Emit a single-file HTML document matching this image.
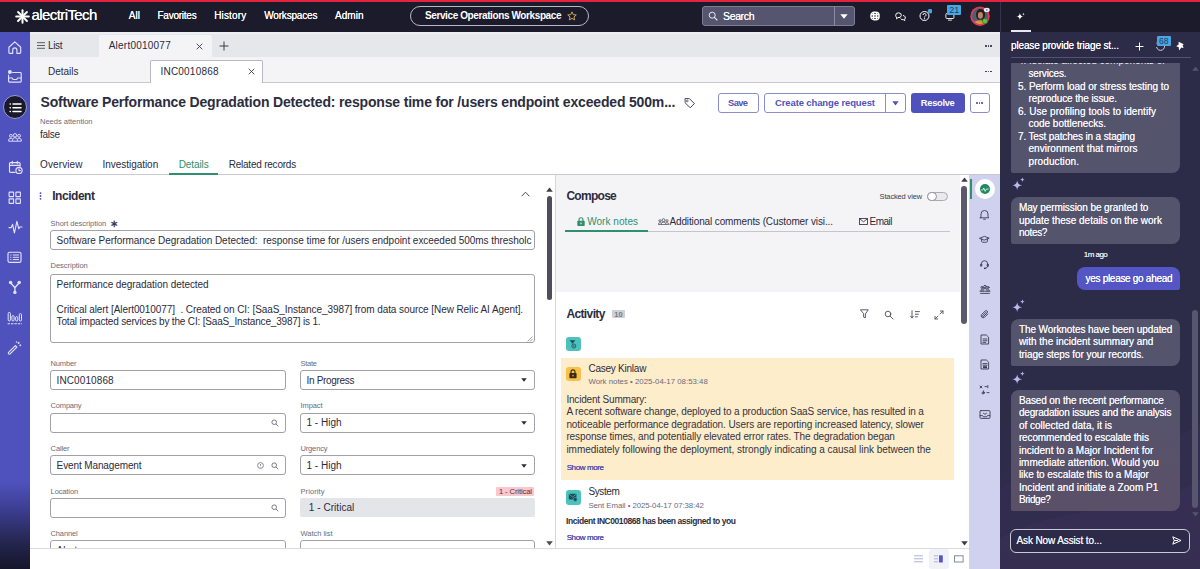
<!DOCTYPE html>
<html lang="en"><head><meta charset="utf-8"><title>Service Operations Workspace</title>
<style>
html,body{margin:0;padding:0;}
body{width:1200px;height:569px;overflow:hidden;position:relative;background:#fff;
font-family:"Liberation Sans",sans-serif;}
.b{position:absolute;box-sizing:border-box;display:block;}
.t{position:absolute;white-space:pre;display:block;}
</style></head><body>
<div class="b" style="left:0px;top:0px;width:1200px;height:32px;background:#1b1b2c;"></div>
<div class="b" style="left:0px;top:0px;width:1200px;height:2px;background:#e4243f;"></div>
<div class="b" style="left:0px;top:32px;width:30px;height:537px;background:linear-gradient(180deg,#4f52bd 0px,#4f52bd 450px,#3a3c8c 480px,#25264f 510px,#15152a 537px);"></div>
<div class="b" style="left:30px;top:32px;width:970px;height:25.5px;background:#e6e7eb;"></div>
<div class="b" style="left:30px;top:31.6px;width:970px;height:2.6px;background:#eeeff2;"></div>
<div class="b" style="left:30px;top:57.3px;width:970px;height:25.7px;background:#f4f4f7;"></div>
<div class="b" style="left:30px;top:82px;width:970px;height:1px;background:#c9cad1;"></div>
<div class="b" style="left:30px;top:83px;width:970px;height:92px;background:#ffffff;"></div>
<div class="b" style="left:30px;top:174px;width:970px;height:1px;background:#c9cad1;"></div>
<svg class="b" style="left:14.6px;top:8.9px;" width="15" height="15" viewBox="0 0 15 15"><g stroke="#fff" stroke-width="2" stroke-linecap="round"><line x1="8.70" y1="7.50" x2="13.80" y2="7.50"/><line x1="8.35" y1="8.35" x2="11.95" y2="11.95"/><line x1="7.50" y1="8.70" x2="7.50" y2="13.80"/><line x1="6.65" y1="8.35" x2="3.05" y2="11.95"/><line x1="6.30" y1="7.50" x2="1.20" y2="7.50"/><line x1="6.65" y1="6.65" x2="3.05" y2="3.05"/><line x1="7.50" y1="6.30" x2="7.50" y2="1.20"/><line x1="8.35" y1="6.65" x2="11.95" y2="3.05"/></g><circle cx="7.5" cy="7.5" r="1.6" fill="#fff"/></svg>
<span class="t" style="left:31.50px;top:5px;font-size:15px;line-height:20px;color:#fff;letter-spacing:-0.590px;text-shadow:0 0 0.5px #fff;">alectriTech</span>
<span class="t" style="left:128.70px;top:9px;font-size:10px;line-height:13px;color:#fff;letter-spacing:0.093px;text-shadow:0 0 0.4px #fff;">All</span>
<span class="t" style="left:157.50px;top:9px;font-size:10px;line-height:13px;color:#fff;letter-spacing:-0.241px;text-shadow:0 0 0.4px #fff;">Favorites</span>
<span class="t" style="left:214.20px;top:9px;font-size:10px;line-height:13px;color:#fff;letter-spacing:0.148px;text-shadow:0 0 0.4px #fff;">History</span>
<span class="t" style="left:264.20px;top:9px;font-size:10px;line-height:13px;color:#fff;letter-spacing:-0.171px;text-shadow:0 0 0.4px #fff;">Workspaces</span>
<span class="t" style="left:335.00px;top:9px;font-size:10px;line-height:13px;color:#fff;letter-spacing:0.038px;text-shadow:0 0 0.4px #fff;">Admin</span>
<div class="b" style="left:410px;top:6px;width:179px;height:20px;border:1px solid #b9b9c6;border-radius:10px;"></div>
<span class="t" style="left:425.00px;top:9px;font-size:10px;line-height:13px;color:#fff;font-weight:700;letter-spacing:-0.393px;">Service Operations Workspace</span>
<svg class="b" style="left:567px;top:11px;" width="10" height="10" viewBox="0 0 10 10"><path d="M5 0.9l1.25 2.75 3 .3-2.25 2 .65 2.95L5 7.4 2.35 8.9 3 5.95.75 3.95l3-.3z" fill="none" stroke="#d9b45a" stroke-width="0.9" stroke-linejoin="round"/></svg>
<div class="b" style="left:702px;top:6px;width:152.5px;height:20px;background:#55556f;border:1px solid #7d7d95;border-radius:3px;"></div>
<div class="b" style="left:834px;top:7px;width:1px;height:18px;background:#8a8aa0;"></div>
<svg class="b" style="left:708px;top:11px;" width="10" height="10" viewBox="0 0 10 10"><circle cx="4.2" cy="4.2" r="3" fill="none" stroke="#e8e8f0" stroke-width="1"/><line x1="6.4" y1="6.4" x2="9" y2="9" stroke="#e8e8f0" stroke-width="1.1" stroke-linecap="round"/></svg>
<span class="t" style="left:723.00px;top:9px;font-size:10.5px;line-height:14px;color:#fff;letter-spacing:-0.354px;text-shadow:0 0 0.4px #fff;">Search</span>
<svg class="b" style="left:840px;top:14px;" width="8" height="5" viewBox="0 0 8 5"><path d="M0.3 0.3h7.4L4 4.7z" fill="#fff"/></svg>
<svg class="b" style="left:870px;top:11px;" width="10" height="10" viewBox="0 0 10 10"><g fill="none" stroke="#fff" stroke-width="1.400"><rect x="0.900" y="1.200" width="8.200" height="7.600" rx="3.200"/><line x1="0.900" y1="3.700" x2="9.100" y2="3.700"/><line x1="0.900" y1="6.300" x2="9.100" y2="6.300"/><line x1="3.600" y1="1.200" x2="3.600" y2="8.800"/><line x1="6.400" y1="1.200" x2="6.400" y2="8.800"/></g></svg>
<svg class="b" style="left:894.5px;top:11.5px;" width="11" height="9" viewBox="0 0 11 9"><g fill="none" stroke="#fff" stroke-width="1" stroke-linejoin="round"><path d="M0.700 3.300a2.800 2.400 0 1 1 2.300 2.300L1.500 6.800V5.200A2.400 2.400 0 0 1 .7 3.300z"/><path d="M5.600 6.600a2.700 2.200 0 0 0 2.800 1.100l1.300 1V7.200a2.200 2.200 0 0 0-1.700-3.700"/></g></svg>
<svg class="b" style="left:918px;top:9px;" width="14" height="14" viewBox="0 0 14 14"><circle cx="6.500" cy="7" r="4.500" fill="none" stroke="#fff" stroke-width="1"/><path d="M5 6a1.500 1.500 0 1 1 2.200 1.300c-.5.300-.7.600-.7 1.100" fill="none" stroke="#fff" stroke-width="1"/><circle cx="6.500" cy="9.700" r=".6" fill="#fff"/><circle cx="12" cy="2.200" r="2.300" fill="#4ea2e0"/></svg>
<svg class="b" style="left:945px;top:12.5px;" width="10" height="8" viewBox="0 0 10 8"><rect x="0.900" y="0.500" width="8" height="5" rx=".8" fill="none" stroke="#fff" stroke-width=".9"/><line x1="3" y1="7.100" x2="6.800" y2="7.100" stroke="#fff" stroke-width=".9"/></svg>
<div class="b" style="left:947px;top:5px;width:14px;height:10px;background:#4aa5e3;border-radius:1px;"></div>
<span class="t" style="left:949.29px;top:4px;font-size:9px;line-height:12px;color:#1d3c66;">21</span>
<svg class="b" style="left:970px;top:6px;" width="20" height="20" viewBox="0 0 20 20"><defs><clipPath id="avc"><circle cx="10" cy="10.200" r="8"/></clipPath></defs><circle cx="10" cy="10.200" r="9.700" fill="#e8384f"/><g clip-path="url(#avc)"><rect x="0" y="0" width="20" height="20" fill="#4f5f78"/><ellipse cx="10.600" cy="8.600" rx="4.600" ry="5.800" fill="#2a1d1e"/><ellipse cx="10.400" cy="9.400" rx="2.500" ry="3.300" fill="#b98468"/><path d="M2 20c.5-4.500 4-5.600 8-5.600s6.500 1.400 8 5.600z" fill="#e8923a"/><path d="M8.600 13.800h3.400l-1.700 2.400z" fill="#b98468"/></g><circle cx="15" cy="15" r="2.600" fill="#62c046" stroke="#2f7a2c" stroke-width=".7"/><ellipse cx="16.800" cy="3.900" rx="2.900" ry="2.100" fill="#f4f0f4"/><circle cx="16.800" cy="3.900" r=".9" fill="#b06a7a"/></svg>
<svg class="b" style="left:7px;top:39.5px;" width="16" height="15" viewBox="0 0 16 15"><path fill="none" stroke="#e2e2fa" stroke-width="1.15" stroke-linecap="round" stroke-linejoin="round" d="M1.900 7.200L7.800 1.900l5.900 5.300V12.400a.9.900 0 0 1-.9.900h-2.900V9.900a2.100 2.100 0 0 0-4.200 0v3.400H2.800a.9.900 0 0 1-.9-.9z"/></svg>
<svg class="b" style="left:7px;top:69px;" width="16" height="15" viewBox="0 0 16 15"><path fill="none" stroke="#e2e2fa" stroke-width="1.15" stroke-linecap="round" stroke-linejoin="round" d="M5.600 3.500h7.700a.9.900 0 0 1 .9.900v7.800a.9.900 0 0 1-.9.900H2.500a.9.900 0 0 1-.9-.9V6"/><path fill="none" stroke="#e2e2fa" stroke-width="1.15" stroke-linecap="round" stroke-linejoin="round" d="M1.600 9h3.600l.9 1.500h3.600L10.600 9h3.600"/><circle cx="2.900" cy="3" r="2" fill="#e2e2fa"/></svg>
<div class="b" style="left:2.8px;top:95px;width:24.2px;height:24.2px;background:#191929;border-radius:50%;border:1px solid #9a9cdc;"></div>
<svg class="b" style="left:8.5px;top:101.5px;" width="14" height="12" viewBox="0 0 14 12"><g stroke="#fff" stroke-width="1.500" stroke-linecap="round"><line x1="4" y1="2" x2="12" y2="2"/><line x1="4" y1="5.700" x2="12" y2="5.700"/><line x1="4" y1="9.400" x2="12" y2="9.400"/><line x1="1.100" y1="2" x2="1.300" y2="2"/><line x1="1.100" y1="5.700" x2="1.300" y2="5.700"/><line x1="1.100" y1="9.400" x2="1.300" y2="9.400"/></g></svg>
<svg class="b" style="left:8px;top:133px;" width="14" height="9" viewBox="0 0 14 9"><g fill="none" stroke="#e2e2fa" stroke-width=".95"><circle cx="7" cy="2.300" r="1.700"/><circle cx="2.900" cy="2.800" r="1.400"/><circle cx="11.100" cy="2.800" r="1.400"/><path d="M4.600 8.200V6.800a2.400 2.100 0 0 1 4.800 0v1.400z"/><path d="M0.700 8.200V7a2.100 1.800 0 0 1 3.600-1.200M13.300 8.200V7a2.100 1.800 0 0 0-3.600-1.200M0.700 8.200h3.900M9.400 8.200h3.900"/></g></svg>
<svg class="b" style="left:7.5px;top:160px;" width="16" height="15" viewBox="0 0 16 15"><path fill="none" stroke="#e2e2fa" stroke-width="1.15" stroke-linecap="round" stroke-linejoin="round" d="M7 12.400H2.500A1 1 0 0 1 1.500 11.400V3.600a1 1 0 0 1 1-1h8.600a1 1 0 0 1 1 1v2.600M1.500 5.400h10.600M4.300 1.200v2.400M9.300 1.200v2.400"/><circle fill="none" stroke="#e2e2fa" stroke-width="1.15" stroke-linecap="round" stroke-linejoin="round" cx="11" cy="10.400" r="3.100"/><path fill="none" stroke="#e2e2fa" stroke-width="1.15" stroke-linecap="round" stroke-linejoin="round" d="M11 8.800v1.800h1.400"/></svg>
<svg class="b" style="left:8.2px;top:190.7px;" width="14" height="14" viewBox="0 0 14 14"><g fill="none" stroke="#e2e2fa" stroke-width="1.100"><rect x="1.100" y="1.100" width="4.500" height="4.500" rx=".4"/><rect x="7.900" y="1.100" width="4.500" height="4.500" rx=".4"/><rect x="1.100" y="7.900" width="4.500" height="4.500" rx=".4"/><rect x="7.900" y="7.900" width="4.500" height="4.500" rx=".4"/></g></svg>
<svg class="b" style="left:7.5px;top:220px;" width="15" height="14" viewBox="0 0 15 14"><path fill="none" stroke="#e2e2fa" stroke-width="1.15" stroke-linecap="round" stroke-linejoin="round" d="M1 7.600h2.200L4.600 4.400 6.400 13 8.900 1.400l1.900 7.400 1-1.800H14"/></svg>
<svg class="b" style="left:7.4px;top:251px;" width="15" height="13" viewBox="0 0 15 13"><rect fill="none" stroke="#e2e2fa" stroke-width="1.15" stroke-linecap="round" stroke-linejoin="round" x="1" y="1.200" width="13" height="10.200" rx="1.600"/><g stroke="#e2e2fa" stroke-width="1" stroke-linecap="round"><line x1="6.200" y1="4" x2="11.600" y2="4"/><line x1="6.200" y1="6.300" x2="11.600" y2="6.300"/><line x1="6.200" y1="8.600" x2="11.600" y2="8.600"/><line x1="3.600" y1="4" x2="4" y2="4"/><line x1="3.600" y1="6.300" x2="4" y2="6.300"/><line x1="3.600" y1="8.600" x2="4" y2="8.600"/></g></svg>
<svg class="b" style="left:8px;top:279.5px;" width="14" height="15" viewBox="0 0 14 15"><g fill="none" stroke="#e2e2fa" stroke-width="1.400" stroke-linecap="round"><path d="M2.600 2.800L6.900 7.600 11.200 2.800M6.900 7.600V12"/></g><circle cx="2.600" cy="2.500" r="1.700" fill="#e2e2fa"/><circle cx="11.200" cy="2.500" r="1.700" fill="#e2e2fa"/><circle cx="6.900" cy="12.400" r="1.700" fill="#e2e2fa"/></svg>
<svg class="b" style="left:6.8px;top:310.5px;" width="16" height="15" viewBox="0 0 16 15"><g fill="none" stroke="#e2e2fa" stroke-width="1"><rect x="1.200" y="1.400" width="2.200" height="8.600" rx="1.100"/><rect x="4.900" y="4.600" width="2.200" height="5.400" rx="1.100"/><rect x="8.600" y="5.600" width="2.200" height="4.400" rx="1.100"/><rect x="12.300" y="2.600" width="2.200" height="7.400" rx="1.100"/></g><line x1="0.600" y1="12.800" x2="15" y2="12.800" stroke="#e2e2fa" stroke-width="1.100" stroke-dasharray="2.400 1"/></svg>
<svg class="b" style="left:7.4px;top:340px;" width="15" height="15" viewBox="0 0 15 15"><path fill="none" stroke="#e2e2fa" stroke-width="1.15" stroke-linecap="round" stroke-linejoin="round" d="M1.600 12.400L8.400 5.600l1.500 1.500-6.800 6.800a1.060 1.060 0 0 1-1.500-1.500z"/><g stroke="#e2e2fa" stroke-width=".9" stroke-linecap="round"><path d="M11.600 2.200v1.400M10.900 2.900h1.400M13.300 4.800v1M12.800 5.300h1M9.400 1.600v.8"/></g></svg>
<svg class="b" style="left:36.5px;top:41.5px;" width="8" height="7" viewBox="0 0 8 7"><g stroke="#4a4a5a" stroke-width=".9"><line x1="0" y1="0.700" x2="8" y2="0.700"/><line x1="0" y1="3.500" x2="8" y2="3.500"/><line x1="0" y1="6.300" x2="8" y2="6.300"/></g></svg>
<span class="t" style="left:48.00px;top:39px;font-size:10px;line-height:13px;color:#2b2b3b;letter-spacing:-0.354px;">List</span>
<div class="b" style="left:98.6px;top:34.5px;width:113.4px;height:23.5px;background:#f4f4f7;border-radius:2px 2px 0 0;"></div>
<span class="t" style="left:108.70px;top:39px;font-size:10px;line-height:13px;color:#2b2b3b;letter-spacing:0.228px;">Alert0010077</span>
<svg class="b" style="left:196px;top:43px;" width="7" height="7" viewBox="0 0 7 7"><path d="M0.700 0.700l5.600 5.600M6.300 0.700L0.700 6.300" stroke="#3b3b4b" stroke-width=".9"/></svg>
<svg class="b" style="left:219px;top:41px;" width="10" height="10" viewBox="0 0 10 10"><path d="M5 0.500v9M0.500 5h9" stroke="#3b3b4b" stroke-width="1"/></svg>
<div class="b" style="left:985.2px;top:45.2px;width:1.6px;height:1.6px;background:#2b2b3b;border-radius:50%;"></div>
<div class="b" style="left:985.2px;top:70.5px;width:1.6px;height:1.6px;background:#2b2b3b;border-radius:50%;"></div>
<div class="b" style="left:987.8000000000001px;top:45.2px;width:1.6px;height:1.6px;background:#2b2b3b;border-radius:50%;"></div>
<div class="b" style="left:987.8000000000001px;top:70.5px;width:1.6px;height:1.6px;background:#2b2b3b;border-radius:50%;"></div>
<div class="b" style="left:990.4000000000001px;top:45.2px;width:1.6px;height:1.6px;background:#2b2b3b;border-radius:50%;"></div>
<div class="b" style="left:990.4000000000001px;top:70.5px;width:1.6px;height:1.6px;background:#2b2b3b;border-radius:50%;"></div>
<span class="t" style="left:48.00px;top:65px;font-size:10px;line-height:13px;color:#2b2b3b;letter-spacing:-0.011px;">Details</span>
<div class="b" style="left:150px;top:60.3px;width:113px;height:22.7px;background:#ffffff;border:1px solid #b9bac3;border-bottom:none;border-radius:2px 2px 0 0;"></div>
<span class="t" style="left:160.50px;top:65px;font-size:10px;line-height:13px;color:#2b2b3b;letter-spacing:0.205px;">INC0010868</span>
<svg class="b" style="left:247.5px;top:68px;" width="7" height="7" viewBox="0 0 7 7"><path d="M0.700 0.700l5.600 5.600M6.300 0.700L0.700 6.300" stroke="#3b3b4b" stroke-width=".9"/></svg>
<span class="t" style="left:40.50px;top:93px;font-size:14px;line-height:18px;color:#2c2d3d;font-weight:700;letter-spacing:-0.168px;">Software Performance Degradation Detected: response time for /users endpoint exceeded 500m...</span>
<svg class="b" style="left:683px;top:96px;" width="13" height="13" viewBox="0 0 13 13"><path d="M2 2.600h4.400l5 5-4.200 4.200-5-5z" fill="none" stroke="#4a4a5a" stroke-width="1" stroke-linejoin="round"/><circle cx="4.300" cy="4.900" r=".9" fill="none" stroke="#4a4a5a" stroke-width=".8"/></svg>
<span class="t" style="left:40.00px;top:117px;font-size:7.5px;line-height:10px;color:#6a6b7c;letter-spacing:-0.003px;">Needs attention</span>
<span class="t" style="left:40.00px;top:128px;font-size:10px;line-height:13px;color:#2b2b3b;letter-spacing:-0.281px;">false</span>
<span class="t" style="left:40.00px;top:158px;font-size:10px;line-height:13px;color:#2b2b3b;letter-spacing:0.118px;">Overview</span>
<span class="t" style="left:102.50px;top:158px;font-size:10px;line-height:13px;color:#2b2b3b;letter-spacing:-0.037px;">Investigation</span>
<span class="t" style="left:178.70px;top:158px;font-size:10px;line-height:13px;color:#2f8f6e;letter-spacing:-0.095px;">Details</span>
<span class="t" style="left:228.70px;top:158px;font-size:10px;line-height:13px;color:#2b2b3b;letter-spacing:-0.221px;">Related records</span>
<div class="b" style="left:169px;top:173px;width:49px;height:2px;background:#2f8f6e;"></div>
<div class="b" style="left:717.5px;top:93px;width:41.5px;height:20px;background:#fff;border:1px solid #8c8dc8;border-radius:3px;"></div>
<span class="t" style="left:728.00px;top:97px;font-size:9.3px;line-height:12px;color:#4f52bd;font-weight:700;letter-spacing:-0.574px;">Save</span>
<div class="b" style="left:764px;top:93px;width:141.5px;height:20px;background:#fff;border:1px solid #8c8dc8;border-radius:3px;"></div>
<div class="b" style="left:885px;top:93px;width:1px;height:20px;background:#8c8dc8;"></div>
<span class="t" style="left:775.00px;top:97px;font-size:9.5px;line-height:12px;color:#4f52bd;font-weight:700;letter-spacing:-0.121px;">Create change request</span>
<svg class="b" style="left:891.5px;top:101px;" width="7" height="5" viewBox="0 0 7 5"><path d="M0.300 0.300h6.400L3.500 4.600z" fill="#4f52bd"/></svg>
<div class="b" style="left:910.5px;top:93px;width:54.5px;height:20px;background:#4f52bd;border-radius:3px;"></div>
<span class="t" style="left:920.80px;top:97px;font-size:9.3px;line-height:12px;color:#fff;font-weight:700;letter-spacing:-0.278px;">Resolve</span>
<div class="b" style="left:970px;top:93px;width:19.5px;height:20px;background:#fff;border:1px solid #8c8dc8;border-radius:3px;"></div>
<div class="b" style="left:976.2px;top:102.4px;width:1.5px;height:1.5px;background:#4f52bd;border-radius:50%;"></div>
<div class="b" style="left:978.7px;top:102.4px;width:1.5px;height:1.5px;background:#4f52bd;border-radius:50%;"></div>
<div class="b" style="left:981.2px;top:102.4px;width:1.5px;height:1.5px;background:#4f52bd;border-radius:50%;"></div>
<div class="b" style="left:30px;top:175px;width:518px;height:373px;background:#ffffff;"></div>
<svg class="b" style="left:39px;top:191.5px;" width="3" height="8" viewBox="0 0 3 8"><g fill="#4a4cb0"><circle cx="1.500" cy="1.200" r=".9"/><circle cx="1.500" cy="4" r=".9"/><circle cx="1.500" cy="6.800" r=".9"/></g></svg>
<span class="t" style="left:52.20px;top:188px;font-size:12px;line-height:16px;color:#2c2d3d;font-weight:700;letter-spacing:-0.458px;">Incident</span>
<svg class="b" style="left:520.5px;top:191px;" width="9" height="6" viewBox="0 0 9 6"><path d="M0.700 5.200L4.500 1.200 8.300 5.200" fill="none" stroke="#4a4a5a" stroke-width="1"/></svg>
<span class="t" style="left:50.60px;top:219px;font-size:7.5px;line-height:10px;color:#6a6b7c;letter-spacing:-0.043px;">Short description</span>
<div class="b" style="left:50.4px;top:230px;width:484.6px;height:20px;background:#fff;border:1px solid #a0a1ac;border-radius:3px;"></div>
<span class="t" style="left:56.60px;top:234px;font-size:10px;line-height:13px;color:#2b2b3b;letter-spacing:-0.036px;">Software Performance Degradation Detected:  response time for /users endpoint exceeded 500ms thresholc</span>
<span class="t" style="left:109.80px;top:218px;font-size:9.5px;line-height:12px;color:#3b3b4b;font-weight:700;">∗</span>
<span class="t" style="left:50.60px;top:261px;font-size:7.5px;line-height:10px;color:#6a6b7c;letter-spacing:-0.032px;">Description</span>
<div class="b" style="left:50.4px;top:273.7px;width:484.6px;height:69.6px;background:#fff;border:1px solid #a0a1ac;border-radius:3px;"></div>
<span class="t" style="left:56.60px;top:278px;font-size:10px;line-height:13px;color:#2b2b3b;letter-spacing:-0.064px;">Performance degradation detected</span>
<span class="t" style="left:56.60px;top:303px;font-size:10px;line-height:13px;color:#2b2b3b;letter-spacing:-0.077px;">Critical alert [Alert0010077]  . Created on CI: [SaaS_Instance_3987] from data source [New Relic AI Agent].</span>
<span class="t" style="left:56.60px;top:315px;font-size:10px;line-height:13px;color:#2b2b3b;letter-spacing:-0.177px;">Total impacted services by the CI: [SaaS_Instance_3987] is 1.</span>
<svg class="b" style="left:527px;top:336px;" width="6" height="6" viewBox="0 0 6 6"><path d="M5.500 0.500L0.500 5.500M5.500 3L3 5.500" stroke="#8f909c" stroke-width=".8"/></svg>
<span class="t" style="left:50.60px;top:359px;font-size:7.5px;line-height:10px;color:#6a6b7c;letter-spacing:-0.175px;">Number</span>
<div class="b" style="left:50.4px;top:370.0px;width:235.6px;height:20.2px;background:#fff;border:1px solid #a0a1ac;border-radius:3px;"></div>
<span class="t" style="left:56.60px;top:374px;font-size:10px;line-height:13px;color:#2b2b3b;letter-spacing:0.094px;">INC0010868</span>
<span class="t" style="left:300.50px;top:359px;font-size:7.5px;line-height:10px;color:#6a6b7c;letter-spacing:-0.253px;">State</span>
<div class="b" style="left:300.3px;top:370.0px;width:234.6px;height:20.2px;background:#fff;border:1px solid #a0a1ac;border-radius:3px;"></div>
<span class="t" style="left:306.50px;top:374px;font-size:10px;line-height:13px;color:#2b2b3b;letter-spacing:-0.313px;">In Progress</span>
<svg class="b" style="left:521.4px;top:378.40000000000003px;" width="6" height="4" viewBox="0 0 6 4"><path d="M0.200 0.200h5.600L3 3.800z" fill="#2b2b3b"/></svg>
<span class="t" style="left:50.60px;top:401px;font-size:7.5px;line-height:10px;color:#6a6b7c;letter-spacing:-0.183px;">Company</span>
<div class="b" style="left:50.4px;top:412.6px;width:235.6px;height:20.2px;background:#fff;border:1px solid #a0a1ac;border-radius:3px;"></div>
<svg class="b" style="left:271.0px;top:419.20000000000005px;" width="8" height="8" viewBox="0 0 8 8"><circle cx="3.200" cy="3.200" r="2.300" fill="none" stroke="#6a6b7c" stroke-width=".9"/><line x1="5" y1="5" x2="7.300" y2="7.300" stroke="#6a6b7c" stroke-width=".9"/></svg>
<span class="t" style="left:300.50px;top:401px;font-size:7.5px;line-height:10px;color:#6a6b7c;letter-spacing:-0.102px;">Impact</span>
<div class="b" style="left:300.3px;top:412.6px;width:234.6px;height:20.2px;background:#fff;border:1px solid #a0a1ac;border-radius:3px;"></div>
<span class="t" style="left:306.50px;top:416px;font-size:10px;line-height:13px;color:#2b2b3b;letter-spacing:-0.002px;">1 - High</span>
<svg class="b" style="left:521.4px;top:421.00000000000006px;" width="6" height="4" viewBox="0 0 6 4"><path d="M0.200 0.200h5.600L3 3.800z" fill="#2b2b3b"/></svg>
<span class="t" style="left:50.60px;top:444px;font-size:7.5px;line-height:10px;color:#6a6b7c;letter-spacing:-0.118px;">Caller</span>
<div class="b" style="left:50.4px;top:455.2px;width:235.6px;height:20.2px;background:#fff;border:1px solid #a0a1ac;border-radius:3px;"></div>
<span class="t" style="left:56.60px;top:459px;font-size:10px;line-height:13px;color:#2b2b3b;letter-spacing:-0.115px;">Event Management</span>
<svg class="b" style="left:271.0px;top:461.8px;" width="8" height="8" viewBox="0 0 8 8"><circle cx="3.200" cy="3.200" r="2.300" fill="none" stroke="#6a6b7c" stroke-width=".9"/><line x1="5" y1="5" x2="7.300" y2="7.300" stroke="#6a6b7c" stroke-width=".9"/></svg>
<svg class="b" style="left:256.5px;top:461.8px;" width="7" height="7" viewBox="0 0 7 7"><circle cx="3.500" cy="3.500" r="2.900" fill="none" stroke="#6a6b7c" stroke-width=".8"/><path d="M3.500 2v1.800M3.500 4.800v.4" stroke="#6a6b7c" stroke-width=".8"/></svg>
<span class="t" style="left:300.50px;top:444px;font-size:7.5px;line-height:10px;color:#6a6b7c;letter-spacing:-0.155px;">Urgency</span>
<div class="b" style="left:300.3px;top:455.2px;width:234.6px;height:20.2px;background:#fff;border:1px solid #a0a1ac;border-radius:3px;"></div>
<span class="t" style="left:306.50px;top:459px;font-size:10px;line-height:13px;color:#2b2b3b;letter-spacing:-0.002px;">1 - High</span>
<svg class="b" style="left:521.4px;top:463.6px;" width="6" height="4" viewBox="0 0 6 4"><path d="M0.200 0.200h5.600L3 3.800z" fill="#2b2b3b"/></svg>
<span class="t" style="left:50.60px;top:487px;font-size:7.5px;line-height:10px;color:#6a6b7c;letter-spacing:-0.122px;">Location</span>
<div class="b" style="left:50.4px;top:497.8px;width:235.6px;height:20.2px;background:#fff;border:1px solid #a0a1ac;border-radius:3px;"></div>
<svg class="b" style="left:271.0px;top:504.40000000000003px;" width="8" height="8" viewBox="0 0 8 8"><circle cx="3.200" cy="3.200" r="2.300" fill="none" stroke="#6a6b7c" stroke-width=".9"/><line x1="5" y1="5" x2="7.300" y2="7.300" stroke="#6a6b7c" stroke-width=".9"/></svg>
<span class="t" style="left:300.50px;top:487px;font-size:7.5px;line-height:10px;color:#6a6b7c;letter-spacing:0.095px;">Priority</span>
<div class="b" style="left:300.3px;top:497.8px;width:234.6px;height:19.2px;background:#e4e5e9;border-radius:2px;"></div>
<span class="t" style="left:308.80px;top:501px;font-size:10px;line-height:13px;color:#2b2b3b;letter-spacing:0.045px;">1 - Critical</span>
<div class="b" style="left:496.4px;top:486.5px;width:38px;height:9.5px;background:#f9c7cd;border-radius:1px;"></div>
<span class="t" style="left:499.00px;top:487px;font-size:7.5px;line-height:10px;color:#4a3238;letter-spacing:-0.069px;">1 - Critical</span>
<span class="t" style="left:50.60px;top:529px;font-size:7.5px;line-height:10px;color:#6a6b7c;letter-spacing:-0.157px;">Channel</span>
<div class="b" style="left:50.4px;top:540.4px;width:235.6px;height:20.2px;background:#fff;border:1px solid #a0a1ac;border-radius:3px;"></div>
<span class="t" style="left:56.60px;top:544px;font-size:10px;line-height:13px;color:#2b2b3b;">Alert</span>
<svg class="b" style="left:272.5px;top:548.8px;" width="6" height="4" viewBox="0 0 6 4"><path d="M0.200 0.200h5.600L3 3.800z" fill="#2b2b3b"/></svg>
<span class="t" style="left:300.50px;top:529px;font-size:7.5px;line-height:10px;color:#6a6b7c;letter-spacing:-0.025px;">Watch list</span>
<div class="b" style="left:300.3px;top:540.4px;width:234.6px;height:20.2px;background:#fff;border:1px solid #a0a1ac;border-radius:3px;"></div>
<svg class="b" style="left:521.9px;top:548px;" width="5" height="5" viewBox="0 0 5 5"><circle cx="2.500" cy="2.500" r="2" fill="none" stroke="#6a6b7c" stroke-width=".8"/></svg>
<div class="b" style="left:546.7px;top:195.5px;width:5.8px;height:104px;background:#4d4d5e;border-radius:3px;"></div>
<svg class="b" style="left:546.3px;top:186.5px;" width="7" height="5" viewBox="0 0 7 5"><path d="M0.200 4.800h6.600L3.500 0.400z" fill="#3b3b4b"/></svg>
<svg class="b" style="left:546.3px;top:541px;" width="7" height="5" viewBox="0 0 7 5"><path d="M0.200 0.200h6.600L3.500 4.600z" fill="#4a4a5a"/></svg>
<div class="b" style="left:554.6px;top:175px;width:1px;height:373px;background:#d6d7dd;"></div>
<div class="b" style="left:555.5px;top:175px;width:404px;height:116.5px;background:#f4f4f7;"></div>
<div class="b" style="left:555.5px;top:291.5px;width:413.5px;height:256.5px;background:#ffffff;"></div>
<span class="t" style="left:566.40px;top:188px;font-size:12px;line-height:16px;color:#2c2d3d;font-weight:700;letter-spacing:-0.712px;">Compose</span>
<span class="t" style="left:879.60px;top:192px;font-size:7.5px;line-height:10px;color:#3b3b4b;letter-spacing:-0.153px;">Stacked view</span>
<div class="b" style="left:927px;top:192px;width:20.5px;height:8.5px;background:#e9e9ee;border:1px solid #a9aab5;border-radius:5px;"></div>
<div class="b" style="left:927px;top:191.5px;width:9.5px;height:9.5px;background:#fff;border:1px solid #8f909c;border-radius:50%;"></div>
<svg class="b" style="left:576.5px;top:216.5px;" width="8" height="9" viewBox="0 0 8 9"><rect x="0.300" y="3.800" width="7.400" height="5.200" rx=".8" fill="#2f8f6e"/><path d="M2 4V2.700a2 2 0 0 1 4 0V4" fill="none" stroke="#2f8f6e" stroke-width="1.100"/><rect x="3.400" y="5.600" width="1.200" height="1.600" fill="#f4f4f7"/></svg>
<span class="t" style="left:587.20px;top:215px;font-size:10px;line-height:13px;color:#2f8f6e;letter-spacing:0.045px;">Work notes</span>
<div class="b" style="left:565.4px;top:229.7px;width:82.6px;height:2px;background:#2f8f6e;"></div>
<div class="b" style="left:648px;top:230.7px;width:302px;height:1px;background:#c4c5cd;"></div>
<svg class="b" style="left:657.5px;top:217.5px;" width="11" height="7" viewBox="0 0 11 7"><g fill="none" stroke="#4a4a5a" stroke-width=".8"><circle cx="5.500" cy="2.200" r="1.500"/><circle cx="2" cy="2.800" r="1.100"/><circle cx="9" cy="2.800" r="1.100"/><path d="M3.400 6.600V5.600a2.100 1.600 0 0 1 4.200 0v1zM0.400 6.600V6a1.600 1.300 0 0 1 2.800-.8M10.600 6.600V6a1.600 1.300 0 0 0-2.800-.8M0.400 6.600h3M7.600 6.600h3"/></g></svg>
<span class="t" style="left:669.40px;top:215px;font-size:10px;line-height:13px;color:#2b2b3b;letter-spacing:-0.118px;">Additional comments (Customer visi...</span>
<svg class="b" style="left:858.5px;top:217.8px;" width="9" height="7" viewBox="0 0 9 7"><rect x="0.500" y="0.500" width="8" height="6" fill="none" stroke="#3b3b4b" stroke-width=".9"/><path d="M0.700 0.800L4.500 3.800 8.300 0.800" fill="none" stroke="#3b3b4b" stroke-width=".9"/></svg>
<span class="t" style="left:869.50px;top:215px;font-size:10px;line-height:13px;color:#2b2b3b;letter-spacing:-0.502px;">Email</span>
<span class="t" style="left:566.40px;top:306px;font-size:12px;line-height:16px;color:#2c2d3d;font-weight:700;letter-spacing:-0.621px;">Activity</span>
<div class="b" style="left:612px;top:309.7px;width:13px;height:8.8px;background:#cdd0d5;border-radius:1px;"></div>
<span class="t" style="left:614.33px;top:310px;font-size:7.5px;line-height:10px;color:#7a7c88;font-weight:700;">10</span>
<svg class="b" style="left:859.5px;top:309px;" width="9" height="10" viewBox="0 0 9 10"><path fill="none" stroke="#4a4a5a" stroke-width=".9" stroke-linejoin="round" stroke-linecap="round" d="M0.800 0.800h7.400L5.400 5v3.800L3.600 8V5z"/></svg>
<svg class="b" style="left:884px;top:309.5px;" width="10" height="10" viewBox="0 0 10 10"><circle fill="none" stroke="#4a4a5a" stroke-width=".9" stroke-linejoin="round" stroke-linecap="round" cx="4" cy="4" r="2.800"/><path fill="none" stroke="#4a4a5a" stroke-width=".9" stroke-linejoin="round" stroke-linecap="round" d="M6.200 6.200L9 9"/></svg>
<svg class="b" style="left:909.5px;top:309.5px;" width="10" height="9" viewBox="0 0 10 9"><path fill="none" stroke="#4a4a5a" stroke-width=".9" stroke-linejoin="round" stroke-linecap="round" d="M2 0.800v7M0.600 6.200L2 7.800 3.400 6.200M5.400 1.600h4M5.400 4.200h3M5.400 6.800h2"/></svg>
<svg class="b" style="left:934px;top:309.5px;" width="10" height="10" viewBox="0 0 10 10"><path fill="none" stroke="#4a4a5a" stroke-width=".9" stroke-linejoin="round" stroke-linecap="round" d="M6.400 1h2.600v2.600M9 1L6 4M3.600 9H1V6.400M1 9l3-3"/></svg>
<div class="b" style="left:566px;top:336.7px;width:14.6px;height:14.7px;background:#4bc2be;border-radius:3px;"></div>
<svg class="b" style="left:568.3px;top:339px;" width="10" height="11" viewBox="0 0 10 11"><path d="M1.600 1.200h5.800L5.200 3.800V4.600L3.800 4.600V3.800z" fill="#1d4a55"/><circle cx="5.800" cy="7" r="2" fill="none" stroke="#1d4a55" stroke-width=".8"/><circle cx="5.800" cy="7" r=".7" fill="#1d4a55"/></svg>
<div class="b" style="left:560.8px;top:358.1px;width:393.2px;height:122.2px;background:#feedca;"></div>
<div class="b" style="left:566px;top:366.8px;width:14.5px;height:14.5px;background:#f7c14b;border-radius:3px;"></div>
<svg class="b" style="left:569.3px;top:369.2px;" width="8" height="10" viewBox="0 0 8 10"><rect x="0.400" y="4" width="7.200" height="5.200" rx=".8" fill="#3a2a10"/><path d="M2 4.200V2.900a2 2 0 0 1 4 0v1.300" fill="none" stroke="#3a2a10" stroke-width="1.100"/><rect x="3.400" y="5.800" width="1.200" height="1.600" fill="#f7c14b"/></svg>
<span class="t" style="left:588.40px;top:362px;font-size:10px;line-height:13px;color:#2b2b3b;letter-spacing:-0.235px;">Casey Kinlaw</span>
<span class="t" style="left:588.40px;top:377px;font-size:7.8px;line-height:10px;color:#6a6b7c;letter-spacing:0.019px;">Work notes • 2025-04-17 08:53:48</span>
<span class="t" style="left:566.40px;top:393px;font-size:10px;line-height:13px;color:#33333f;letter-spacing:-0.185px;">Incident Summary:</span>
<span class="t" style="left:566.40px;top:405px;font-size:10px;line-height:13px;color:#33333f;letter-spacing:-0.137px;">A recent software change, deployed to a production SaaS service, has resulted in a</span>
<span class="t" style="left:566.40px;top:418px;font-size:10px;line-height:13px;color:#33333f;letter-spacing:-0.101px;">noticeable performance degradation. Users are reporting increased latency, slower</span>
<span class="t" style="left:566.40px;top:430px;font-size:10px;line-height:13px;color:#33333f;letter-spacing:-0.103px;">response times, and potentially elevated error rates. The degradation began</span>
<span class="t" style="left:566.40px;top:443px;font-size:10px;line-height:13px;color:#33333f;letter-spacing:-0.029px;">immediately following the deployment, strongly indicating a causal link between the</span>
<span class="t" style="left:566.70px;top:463px;font-size:8px;line-height:10px;color:#4a4cae;letter-spacing:-0.408px;text-shadow:0 0 0.400px #4a4cae;">Show more</span>
<div class="b" style="left:566px;top:490px;width:14.6px;height:14.7px;background:#4bc2be;border-radius:3px;"></div>
<svg class="b" style="left:568.3px;top:493px;" width="10" height="9" viewBox="0 0 10 9"><rect x="0.800" y="0.800" width="7.600" height="5.600" rx=".6" fill="#1d4a55"/><path d="M1 1.200L4.600 4 8.200 1.200" fill="none" stroke="#4bc2be" stroke-width=".7"/><circle cx="7.200" cy="6.400" r="2" fill="#1d4a55" stroke="#4bc2be" stroke-width=".6"/></svg>
<span class="t" style="left:588.40px;top:485px;font-size:10px;line-height:13px;color:#2b2b3b;letter-spacing:-0.368px;">System</span>
<span class="t" style="left:588.40px;top:501px;font-size:7.8px;line-height:10px;color:#6a6b7c;letter-spacing:-0.055px;">Sent Email • 2025-04-17 07:38:42</span>
<span class="t" style="left:566.00px;top:516px;font-size:8.5px;line-height:11px;color:#2c2d3d;font-weight:700;letter-spacing:-0.441px;">Incident INC0010868 has been assigned to you</span>
<span class="t" style="left:566.70px;top:533px;font-size:8px;line-height:10px;color:#4a4cae;letter-spacing:-0.408px;text-shadow:0 0 0.400px #4a4cae;">Show more</span>
<div class="b" style="left:961.3px;top:186px;width:5.5px;height:138px;background:#5a5a6c;border-radius:3px;"></div>
<svg class="b" style="left:960.5px;top:177px;" width="7" height="5" viewBox="0 0 7 5"><path d="M0.200 4.800h6.600L3.500 0.400z" fill="#3b3b4b"/></svg>
<svg class="b" style="left:960.5px;top:541px;" width="7" height="5" viewBox="0 0 7 5"><path d="M0.200 0.200h6.600L3.500 4.600z" fill="#3b3b4b"/></svg>
<div class="b" style="left:969.2px;top:175px;width:30.8px;height:394px;background:#d0d1ee;"></div>
<div class="b" style="left:970px;top:179px;width:1.5px;height:20px;background:#2f8f6e;"></div>
<div class="b" style="left:975.1px;top:179.3px;width:19.8px;height:19.8px;background:#fff;border-radius:50%;"></div>
<div class="b" style="left:979.7px;top:183.7px;width:10.7px;height:10.7px;background:#1f8a63;border-radius:50%;"></div>
<svg class="b" style="left:981px;top:186.6px;" width="8" height="5" viewBox="0 0 8 5"><path d="M0.300 3h1.500l1-2 1.400 3.400 1.200-2.400h2.300" fill="none" stroke="#fff" stroke-width=".8" stroke-linejoin="round"/></svg>
<svg class="b" style="left:979px;top:209px;" width="11" height="11" viewBox="0 0 11 11"><path fill="none" stroke="#3b3b55" stroke-width=".9" stroke-linejoin="round" stroke-linecap="round" d="M2 8V5a3.500 3.500 0 0 1 7 0v3l.8 .8H1.200zM4.600 10.200h1.800"/></svg>
<svg class="b" style="left:979px;top:234.5px;" width="11" height="10" viewBox="0 0 11 10"><path fill="none" stroke="#3b3b55" stroke-width=".9" stroke-linejoin="round" stroke-linecap="round" d="M0.800 3.200L5.500 1.400l4.700 1.800L5.500 5zM2.600 4v2.600c0 1 5.800 1 5.800 0V4"/></svg>
<svg class="b" style="left:979px;top:258.5px;" width="11" height="11" viewBox="0 0 11 11"><path fill="none" stroke="#3b3b55" stroke-width=".9" stroke-linejoin="round" stroke-linecap="round" d="M2.400 6V4.800a3.100 3.100 0 0 1 6.200 0V6M2.400 5.200H1.600v2h.8zM8.600 5.200h.8v2h-.8zM8.600 7.200c0 1.400-1 2-2.400 2"/><circle cx="5.800" cy="9.300" r=".9" fill="#3b3b55"/></svg>
<svg class="b" style="left:978.5px;top:283.5px;" width="12" height="11" viewBox="0 0 12 11"><path fill="none" stroke="#3b3b55" stroke-width=".9" stroke-linejoin="round" stroke-linecap="round" d="M1 7.200h10M2 7.200V6c0-.8 1.200-1.200 2-1.200M10 7.200V6c0-.8-1.200-1.200-2-1.200M4 7.200V5.400c0-1 4-1 4 0v1.800M1.600 9.400h8.800"/><circle fill="none" stroke="#3b3b55" stroke-width=".9" stroke-linejoin="round" stroke-linecap="round" cx="6" cy="2.600" r="1.300"/><circle fill="none" stroke="#3b3b55" stroke-width=".9" stroke-linejoin="round" stroke-linecap="round" cx="3" cy="3.400" r="1"/><circle fill="none" stroke="#3b3b55" stroke-width=".9" stroke-linejoin="round" stroke-linecap="round" cx="9" cy="3.400" r="1"/></svg>
<svg class="b" style="left:979px;top:309px;" width="11" height="11" viewBox="0 0 11 11"><path fill="none" stroke="#3b3b55" stroke-width=".9" stroke-linejoin="round" stroke-linecap="round" d="M8.800 5L5.400 8.400a2 2 0 0 1-2.800-2.800L6.200 2a1.300 1.300 0 0 1 1.900 1.900L4.600 7.400a.6.600 0 0 1-.9-.9L6.800 3.400"/></svg>
<svg class="b" style="left:979.5px;top:334px;" width="10" height="11" viewBox="0 0 10 11"><path fill="none" stroke="#3b3b55" stroke-width=".9" stroke-linejoin="round" stroke-linecap="round" d="M1.400 1h5l2.200 2.200V10H1.400zM3 5h4M3 6.800h4M3 8.400h2.600"/></svg>
<svg class="b" style="left:979.5px;top:359px;" width="10" height="11" viewBox="0 0 10 11"><path fill="none" stroke="#3b3b55" stroke-width=".9" stroke-linejoin="round" stroke-linecap="round" d="M1.400 1h5l2.200 2.200V10H1.400zM3 4.600h4M3 6.200h4"/><rect x="3" y="7.200" width="4" height="2" fill="#3b3b55"/></svg>
<svg class="b" style="left:979px;top:384px;" width="11" height="11" viewBox="0 0 11 11"><path fill="none" stroke="#3b3b55" stroke-width=".9" stroke-linejoin="round" stroke-linecap="round" d="M1 2l2 2M3 2L1 4M6 2.600h1.600M8.800 1.400v2.400M8 8.600h2M4.600 6.800v1.800h1"/><circle fill="none" stroke="#3b3b55" stroke-width=".9" stroke-linejoin="round" stroke-linecap="round" cx="4" cy="9" r="1"/></svg>
<svg class="b" style="left:978.5px;top:408.5px;" width="12" height="11" viewBox="0 0 12 11"><rect fill="none" stroke="#3b3b55" stroke-width=".9" stroke-linejoin="round" stroke-linecap="round" x="1" y="1.600" width="10" height="7.800" rx="1"/><path fill="none" stroke="#3b3b55" stroke-width=".9" stroke-linejoin="round" stroke-linecap="round" d="M1.200 6.600h2.400l.8 1.200h3.200l.8-1.200h2.400M4.400 4.200L6 5.400l1.600-1.200"/></svg>
<div class="b" style="left:30px;top:548px;width:939px;height:21px;background:#ffffff;"></div>
<div class="b" style="left:30px;top:548px;width:939px;height:1px;background:#d9dae0;"></div>
<div class="b" style="left:928.5px;top:549px;width:20.5px;height:20px;background:#f1f1f9;border-radius:3px;"></div>
<svg class="b" style="left:914px;top:555px;" width="9" height="8" viewBox="0 0 9 8"><g stroke="#a9aad0" stroke-width=".9"><line x1="0" y1="0.800" x2="9" y2="0.800"/><line x1="0" y1="3.800" x2="9" y2="3.800"/><line x1="0" y1="6.800" x2="9" y2="6.800"/></g></svg>
<svg class="b" style="left:934px;top:555px;" width="9" height="8" viewBox="0 0 9 8"><g stroke="#a9aad0" stroke-width=".9"><line x1="0" y1="0.800" x2="4" y2="0.800"/><line x1="0" y1="3.800" x2="4" y2="3.800"/><line x1="0" y1="6.800" x2="4" y2="6.800"/></g><rect x="5" y="0.300" width="3.800" height="7.200" rx=".6" fill="#5558c0"/></svg>
<svg class="b" style="left:954px;top:555px;" width="10" height="8" viewBox="0 0 10 8"><rect x="0.500" y="0.800" width="8.600" height="6.200" fill="none" stroke="#7c7d92" stroke-width=".9"/></svg>
<div class="b" style="left:1000px;top:32px;width:200px;height:537px;background:linear-gradient(180deg,#2c2b48 0px,#2c2b48 380px,#302c4b 470px,#2f2949 537px);"></div>
<div class="b" style="left:1000px;top:2px;width:1px;height:30px;background:#33334a;"></div>
<svg class="b" style="left:1000px;top:420px;" width="200" height="149" viewBox="0 0 200 149"><path d="M0 70C50 30 120 45 200 5V149H0z" fill="#3b3259" opacity=".28"/><path d="M0 118C70 80 130 100 200 60V149H0z" fill="#43365f" opacity=".25"/></svg>
<svg class="b" style="left:1015.5px;top:12px;" width="9" height="9" viewBox="0 0 11.500 10"><path d="M5 0.500C5.400 3.400 6.600 4.600 9.500 5 6.600 5.400 5.400 6.600 5 9.500 4.600 6.600 3.400 5.400 0.500 5 3.400 4.600 4.600 3.400 5 0.500z" fill="#fff"/><path d="M9.600 0.200c.2 1.100.6 1.500 1.700 1.700-1.100.2-1.500.6-1.700 1.700-.2-1.100-.6-1.500-1.700-1.700 1.100-.2 1.500-.6 1.700-1.700z" fill="#fff"/></svg>
<div class="b" style="left:1010.5px;top:30px;width:20px;height:1.5px;background:#e8e8f0;"></div>
<span class="t" style="left:1011.00px;top:39px;font-size:10px;line-height:13px;color:#fff;letter-spacing:-0.143px;text-shadow:0 0 0.400px #fff;">please provide triage st...</span>
<svg class="b" style="left:1135px;top:42px;" width="9" height="9" viewBox="0 0 9 9"><path d="M4.500 0.500v8M0.500 4.500h8" stroke="#fff" stroke-width="1"/></svg>
<svg class="b" style="left:1154.5px;top:41px;" width="11" height="11" viewBox="0 0 11 11"><path d="M2.200 3.200A4 4 0 1 1 1.600 6M2.200 1v2.400h2.400" fill="none" stroke="#d0d0e0" stroke-width="1"/></svg>
<div class="b" style="left:1157px;top:36px;width:13.5px;height:9.5px;background:#4aa5e3;border-radius:1px;"></div>
<span class="t" style="left:1159.07px;top:36px;font-size:8.5px;line-height:11px;color:#1d3c66;">68</span>
<svg class="b" style="left:1175px;top:41px;" width="11" height="11" viewBox="0 0 11 11"><path d="M3.600 0.800L8.800 3.200 7.600 4.200 8.600 7 6.400 6.400 4 9.600 3.800 6.200 1.200 5.200 3.600 3.400z" fill="#fff"/></svg>
<div class="b" style="left:1010.5px;top:56.5px;width:180px;height:1px;background:#55546d;"></div>
<div class="b" style="left:1011px;top:63px;width:169px;height:109.8px;background:#55546d;border-radius:0 0 8px 2px;"></div>
<span class="t" style="left:1028.50px;top:67px;font-size:10px;line-height:13px;color:#f4f4fa;letter-spacing:-0.182px;text-shadow:0 0 0.300px #f4f4fa;">services.</span>
<span class="t" style="left:1018.00px;top:80px;font-size:10px;line-height:13px;color:#f4f4fa;letter-spacing:-0.053px;text-shadow:0 0 0.300px #f4f4fa;">5. Perform load or stress testing to</span>
<span class="t" style="left:1028.50px;top:92px;font-size:10px;line-height:13px;color:#f4f4fa;letter-spacing:-0.111px;text-shadow:0 0 0.300px #f4f4fa;">reproduce the issue.</span>
<span class="t" style="left:1018.00px;top:105px;font-size:10px;line-height:13px;color:#f4f4fa;letter-spacing:0.055px;text-shadow:0 0 0.300px #f4f4fa;">6. Use profiling tools to identify</span>
<span class="t" style="left:1028.50px;top:117px;font-size:10px;line-height:13px;color:#f4f4fa;letter-spacing:-0.021px;text-shadow:0 0 0.300px #f4f4fa;">code bottlenecks.</span>
<span class="t" style="left:1018.00px;top:130px;font-size:10px;line-height:13px;color:#f4f4fa;letter-spacing:-0.148px;text-shadow:0 0 0.300px #f4f4fa;">7. Test patches in a staging</span>
<span class="t" style="left:1028.50px;top:142px;font-size:10px;line-height:13px;color:#f4f4fa;letter-spacing:0.027px;text-shadow:0 0 0.300px #f4f4fa;">environment that mirrors</span>
<span class="t" style="left:1028.50px;top:155px;font-size:10px;line-height:13px;color:#f4f4fa;letter-spacing:0.102px;text-shadow:0 0 0.300px #f4f4fa;">production.</span>
<div class="b" style="left:1011px;top:63px;width:170px;height:4px;overflow:hidden;"><span class="t" style="left:7px;top:-9.500px;font-size:10px;line-height:14px;color:#f4f4fa;letter-spacing:0px;">4. Isolate affected components or</span></div>
<svg class="b" style="left:1012.3px;top:177px;" width="13.2" height="13.2" viewBox="0 0 13.2 13.2"><path d="M5.200 3.200C5.600 6.400 6.800 7.600 10.200 8.200 6.800 8.800 5.600 10 5.200 13.200 4.800 10 3.600 8.800 0.200 8.200 3.600 7.600 4.800 6.400 5.200 3.200z" fill="#bbb7ee"/><path d="M10.400 0.200c.3 1.600.8 2.100 2.400 2.400-1.600.3-2.100.8-2.400 2.400-.3-1.600-.8-2.100-2.400-2.400 1.600-.3 2.100-.8 2.400-2.400z" fill="#bbb7ee"/></svg>
<div class="b" style="left:1011px;top:196.8px;width:169px;height:47px;background:#55546d;border-radius:8px 8px 8px 2px;"></div>
<span class="t" style="left:1018.90px;top:201px;font-size:10px;line-height:13px;color:#f4f4fa;letter-spacing:-0.083px;text-shadow:0 0 0.300px #f4f4fa;">May permission be granted to</span>
<span class="t" style="left:1018.90px;top:214px;font-size:10px;line-height:13px;color:#f4f4fa;letter-spacing:-0.032px;text-shadow:0 0 0.300px #f4f4fa;">update these details on the work</span>
<span class="t" style="left:1018.90px;top:226px;font-size:10px;line-height:13px;color:#f4f4fa;letter-spacing:-0.305px;text-shadow:0 0 0.300px #f4f4fa;">notes?</span>
<span class="t" style="left:1083.80px;top:250px;font-size:8px;line-height:10px;color:#e8e8f0;letter-spacing:-0.537px;text-shadow:0 0 0.300px #e8e8f0;">1m ago</span>
<div class="b" style="left:1077.4px;top:267.2px;width:102.8px;height:22.6px;background:#5356c4;border-radius:8px 8px 2px 8px;"></div>
<span class="t" style="left:1085.50px;top:272px;font-size:10px;line-height:13px;color:#fff;letter-spacing:-0.294px;text-shadow:0 0 0.300px #fff;">yes please go ahead</span>
<svg class="b" style="left:1012.3px;top:299px;" width="13.2" height="13.2" viewBox="0 0 13.2 13.2"><path d="M5.200 3.200C5.600 6.400 6.800 7.600 10.200 8.200 6.800 8.800 5.600 10 5.200 13.200 4.800 10 3.600 8.800 0.200 8.200 3.600 7.600 4.800 6.400 5.200 3.200z" fill="#bbb7ee"/><path d="M10.400 0.200c.3 1.600.8 2.100 2.400 2.400-1.600.3-2.100.8-2.400 2.400-.3-1.600-.8-2.100-2.400-2.400 1.600-.3 2.100-.8 2.400-2.400z" fill="#bbb7ee"/></svg>
<div class="b" style="left:1011px;top:318.9px;width:169px;height:46.8px;background:#55546d;border-radius:8px 8px 8px 2px;"></div>
<span class="t" style="left:1018.90px;top:323px;font-size:10px;line-height:13px;color:#f4f4fa;letter-spacing:-0.085px;text-shadow:0 0 0.300px #f4f4fa;">The Worknotes have been updated</span>
<span class="t" style="left:1018.90px;top:335px;font-size:10px;line-height:13px;color:#f4f4fa;letter-spacing:-0.020px;text-shadow:0 0 0.300px #f4f4fa;">with the incident summary and</span>
<span class="t" style="left:1018.90px;top:348px;font-size:10px;line-height:13px;color:#f4f4fa;letter-spacing:-0.079px;text-shadow:0 0 0.300px #f4f4fa;">triage steps for your records.</span>
<svg class="b" style="left:1012.3px;top:371px;" width="13.2" height="13.2" viewBox="0 0 13.2 13.2"><path d="M5.200 3.200C5.600 6.400 6.800 7.600 10.200 8.200 6.800 8.800 5.600 10 5.200 13.200 4.800 10 3.600 8.800 0.200 8.200 3.600 7.600 4.800 6.400 5.200 3.200z" fill="#bbb7ee"/><path d="M10.400 0.200c.3 1.600.8 2.100 2.400 2.400-1.600.3-2.100.8-2.400 2.400-.3-1.600-.8-2.100-2.400-2.400 1.600-.3 2.100-.8 2.400-2.400z" fill="#bbb7ee"/></svg>
<div class="b" style="left:1011px;top:390px;width:169px;height:121px;border-radius:8px 8px 8px 2px;background:linear-gradient(180deg,#55546d 0%,#5a5068 100%);"></div>
<span class="t" style="left:1018.90px;top:394px;font-size:10px;line-height:13px;color:#f4f4fa;letter-spacing:-0.114px;text-shadow:0 0 0.300px #f4f4fa;">Based on the recent performance</span>
<span class="t" style="left:1018.90px;top:406px;font-size:10px;line-height:13px;color:#f4f4fa;letter-spacing:-0.191px;text-shadow:0 0 0.300px #f4f4fa;">degradation issues and the analysis</span>
<span class="t" style="left:1018.90px;top:419px;font-size:10px;line-height:13px;color:#f4f4fa;letter-spacing:-0.017px;text-shadow:0 0 0.300px #f4f4fa;">of collected data, it is</span>
<span class="t" style="left:1018.90px;top:431px;font-size:10px;line-height:13px;color:#f4f4fa;letter-spacing:-0.126px;text-shadow:0 0 0.300px #f4f4fa;">recommended to escalate this</span>
<span class="t" style="left:1018.90px;top:444px;font-size:10px;line-height:13px;color:#f4f4fa;letter-spacing:0.017px;text-shadow:0 0 0.300px #f4f4fa;">incident to a Major Incident for</span>
<span class="t" style="left:1018.90px;top:456px;font-size:10px;line-height:13px;color:#f4f4fa;letter-spacing:0.004px;text-shadow:0 0 0.300px #f4f4fa;">immediate attention. Would you</span>
<span class="t" style="left:1018.90px;top:468px;font-size:10px;line-height:13px;color:#f4f4fa;letter-spacing:-0.056px;text-shadow:0 0 0.300px #f4f4fa;">like to escalate this to a Major</span>
<span class="t" style="left:1018.90px;top:481px;font-size:10px;line-height:13px;color:#f4f4fa;letter-spacing:0.055px;text-shadow:0 0 0.300px #f4f4fa;">Incident and initiate a Zoom P1</span>
<span class="t" style="left:1018.90px;top:493px;font-size:10px;line-height:13px;color:#f4f4fa;letter-spacing:-0.412px;text-shadow:0 0 0.300px #f4f4fa;">Bridge?</span>
<div class="b" style="left:1010px;top:529px;width:179.5px;height:23.5px;background:rgba(40,38,66,.6);border:1px solid #c9c9d8;border-radius:6px;"></div>
<span class="t" style="left:1016.50px;top:534px;font-size:10px;line-height:13px;color:#f0f0f8;letter-spacing:-0.121px;text-shadow:0 0 0.300px #f0f0f8;">Ask Now Assist to...</span>
<svg class="b" style="left:1172px;top:536px;" width="10" height="9" viewBox="0 0 10 9"><path d="M0.800 0.800L9 4.500 0.800 8.200 2.200 4.500z M2.200 4.500H6" fill="none" stroke="#fff" stroke-width="1" stroke-linejoin="round"/></svg>
<div class="b" style="left:1192.3px;top:309.7px;width:5.5px;height:198.5px;background:#57566f;border-radius:3px;"></div>
<svg class="b" style="left:1191.5px;top:66px;" width="7" height="5" viewBox="0 0 7 5"><path d="M0.200 4.800h6.600L3.500 0.400z" fill="#55546d"/></svg>
<svg class="b" style="left:1191.5px;top:511.5px;" width="7" height="5" viewBox="0 0 7 5"><path d="M0.200 0.200h6.600L3.500 4.600z" fill="#55546d"/></svg>
</body></html>
